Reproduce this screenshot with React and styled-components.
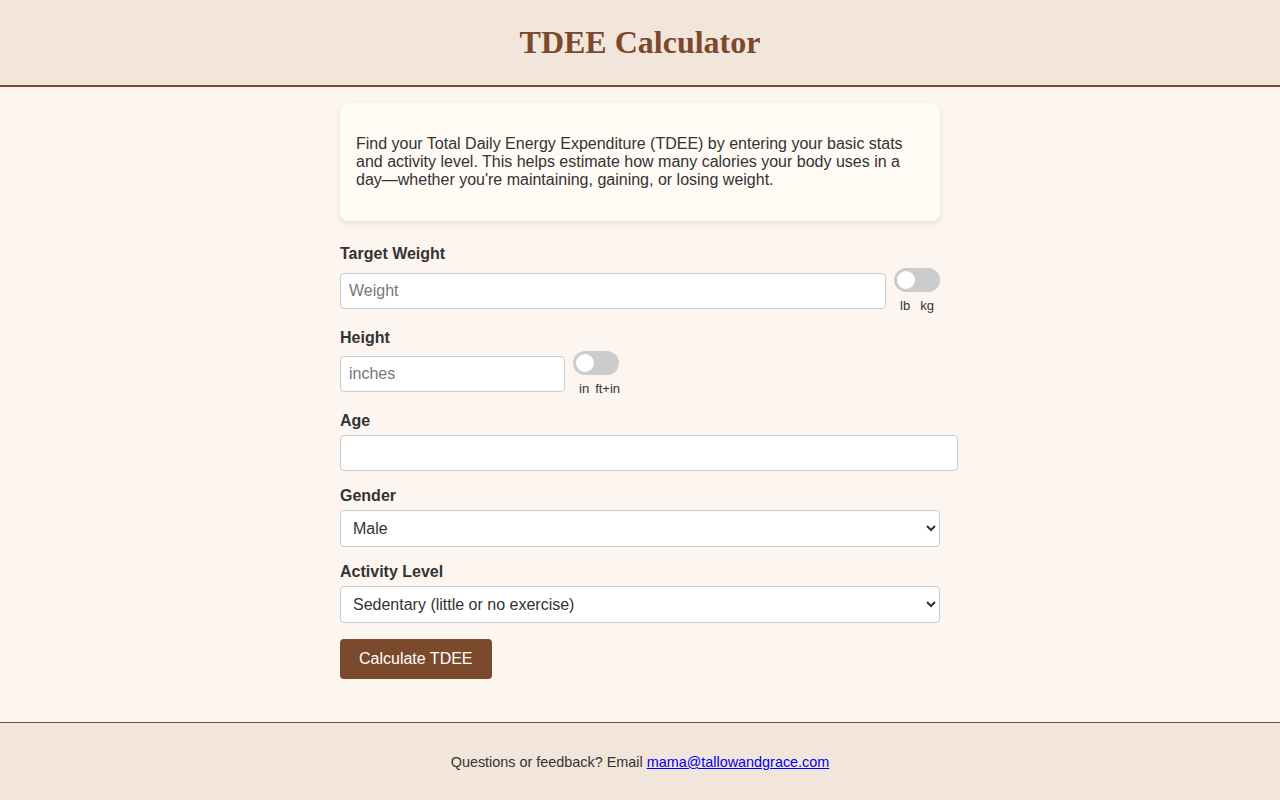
import React, { useState } from "react";
import styled, { createGlobalStyle } from "styled-components";

const Global = createGlobalStyle`
  html, body { margin: 0; padding: 0; }
  body {
    background: #fdf5ef;
    font-family: "Liberation Sans", Arial, sans-serif;
    color: #333;
  }
`;

const Page = styled.div`
  min-height: 100vh;
  display: flex;
  flex-direction: column;
`;

const Header = styled.header`
  background: #f2e6dc;
  border-bottom: 2px solid #7b4a2c;
  padding: 24px 0;
  text-align: center;
`;

const Title = styled.h1`
  margin: 0;
  font-family: "Liberation Serif", "Times New Roman", serif;
  font-size: 32px;
  line-height: 37px;
  font-weight: bold;
  color: #7b4a2c;
`;

const Main = styled.main`
  flex: 1;
  width: 600px;
  margin: 0 auto;
  padding-top: 16px;
`;

const Card = styled.section`
  background: #fffaf4;
  border-radius: 8px;
  box-shadow: 0 2px 6px rgba(0, 0, 0, 0.1);
  padding: 16px;
  margin-bottom: 24px;
`;

const Intro = styled.p`
  margin: 16px 0;
  font-size: 16px;
  line-height: 18px;
`;

const Group = styled.div`
  margin-bottom: ${(p) => p.$mb || 16}px;
`;

const Label = styled.label`
  display: block;
  font-weight: bold;
  font-size: 16px;
  line-height: 18px;
  margin-bottom: ${(p) => p.$mb || 5}px;
`;

const Row = styled.div`
  display: flex;
  align-items: center;
  gap: 8px;
`;

const TextInput = styled.input`
  font-family: "Liberation Sans", Arial, sans-serif;
  font-size: 16px;
  line-height: 18px;
  padding: 8px;
  border: 1px solid #ccc;
  border-radius: 4px;
  background: #fff;
  color: #333;
  box-sizing: content-box;
  width: ${(p) => (p.$w ? `${p.$w}px` : "100%")};
  flex: ${(p) => (p.$grow ? 1 : "none")};
  min-width: 0;
  &::placeholder { color: #777; }
`;

const Select = styled.select`
  display: block;
  width: 100%;
  height: 37px;
  font-family: "Liberation Sans", Arial, sans-serif;
  font-size: 16px;
  padding: 0 8px;
  border: 1px solid #ccc;
  border-radius: 4px;
  background: #fff;
  color: #333;
`;

const ToggleWrap = styled.div`
  display: flex;
  flex-direction: column;
  width: 46px;
  gap: 6px;
  flex: none;
`;

const Track = styled.button`
  position: relative;
  width: 46px;
  height: 24px;
  border: none;
  padding: 0;
  border-radius: 12px;
  background: ${(p) => (p.$on ? "#7b4a2c" : "#ccc")};
  cursor: pointer;
`;

const Knob = styled.span`
  position: absolute;
  top: 3px;
  left: ${(p) => (p.$on ? 25 : 3)}px;
  width: 18px;
  height: 18px;
  border-radius: 50%;
  background: #fff;
`;

const UnitRow = styled.div`
  display: flex;
  justify-content: space-between;
  gap: 6px;
  padding: 0 6px;
  font-size: 13px;
  line-height: 16px;
  white-space: nowrap;
`;

const Button = styled.button`
  font-family: "Liberation Sans", Arial, sans-serif;
  font-size: 16px;
  line-height: 18px;
  padding: 11px 19px;
  border: none;
  border-radius: 4px;
  background: #7b4a2c;
  color: #fff;
  cursor: pointer;
`;

const Footer = styled.footer`
  background: #f2e6dc;
  border-top: 1px solid #7b4a2c;
  padding: 31px 0 29px;
  text-align: center;
  font-size: 14.4px;
  line-height: 17px;
`;

const Link = styled.a`
  color: #0000ee;
  text-decoration: underline;
`;

function Toggle({ left, right }) {
  const [on, setOn] = useState(false);
  return (
    <ToggleWrap>
      <Track $on={on} onClick={() => setOn(!on)} aria-label={`${left} / ${right}`}>
        <Knob $on={on} />
      </Track>
      <UnitRow>
        <span>{left}</span>
        <span>{right}</span>
      </UnitRow>
    </ToggleWrap>
  );
}

export default function App() {
  return (
    <Page>
      <Global />
      <Header>
        <Title>TDEE Calculator</Title>
      </Header>
      <Main>
        <Card>
          <Intro>
            Find your Total Daily Energy Expenditure (TDEE) by entering your basic stats
            and activity level. This helps estimate how many calories your body uses in a
            day—whether you're maintaining, gaining, or losing weight.
          </Intro>
        </Card>

        <Group $mb={15}>
          <Label>Target Weight</Label>
          <Row>
            <TextInput $grow placeholder="Weight" />
            <Toggle left="lb" right="kg" />
          </Row>
        </Group>

        <Group $mb={15}>
          <Label $mb={4}>Height</Label>
          <Row>
            <TextInput $w={207} placeholder="inches" />
            <Toggle left="in" right="ft+in" />
          </Row>
        </Group>

        <Group>
          <Label>Age</Label>
          <TextInput />
        </Group>

        <Group>
          <Label>Gender</Label>
          <Select defaultValue="male">
            <option value="male">Male</option>
            <option value="female">Female</option>
          </Select>
        </Group>

        <Group>
          <Label>Activity Level</Label>
          <Select defaultValue="sedentary">
            <option value="sedentary">Sedentary (little or no exercise)</option>
            <option value="light">Lightly active (1-3 days/week)</option>
            <option value="moderate">Moderately active (3-5 days/week)</option>
            <option value="very">Very active (6-7 days/week)</option>
          </Select>
        </Group>

        <Button>Calculate TDEE</Button>
      </Main>
      <Footer>
        Questions or feedback? Email{" "}
        <Link href="mailto:mama@tallowandgrace.com">mama@tallowandgrace.com</Link>
      </Footer>
    </Page>
  );
}
